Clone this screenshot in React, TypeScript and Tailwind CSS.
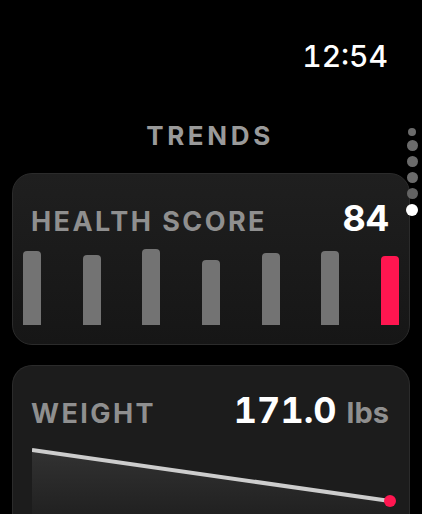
import React from "react";

const bars = [74, 70, 76, 65, 72, 74, 69];

export default function App() {
  return (
    <div
      className="relative w-[422px] h-[514px] overflow-hidden bg-black text-white"
      style={{ fontFamily: "Inter, 'Noto Sans', sans-serif" }}
    >
      <div className="flex justify-end pr-[34px] pt-[41px]">
        <div className="text-[30px] leading-[30px] font-medium tabular-nums">12:54</div>
      </div>
      <div className="mt-[52px] flex justify-center">
        <div className="text-[26px] leading-[26px] font-bold tracking-[0.14em] text-[#9a9a9a] mr-[2px]">
          TRENDS
        </div>
      </div>

      <div className="flex flex-col gap-[20px] px-[12px] mt-[24px]">
        <div className="rounded-[20px] border border-[#2b2b2b] bg-gradient-to-b from-[#1f1f1f] to-[#161616] pt-[26px] pb-[19px] px-[10px]">
          <div className="flex items-baseline justify-between pl-[8px] pr-[10px] h-[36px]">
            <div className="text-[27px] leading-[27px] font-bold tracking-[0.09em] text-[#8f8f8f]">
              HEALTH SCORE
            </div>
            <div className="text-[36px] leading-[36px] font-bold tabular-nums">84</div>
          </div>
          <div className="mt-[13px] h-[76px] flex items-end justify-between">
            {bars.map((h, i) => (
              <div
                key={i}
                className={
                  i === bars.length - 1
                    ? "w-[18px] rounded-t-[4px] bg-[#ff1650]"
                    : "w-[18px] rounded-t-[4px] bg-[#737373]"
                }
                style={{ height: h }}
              />
            ))}
          </div>
        </div>

        <div className="rounded-t-[20px] border border-b-0 border-[#2b2b2b] bg-[#1c1c1c] pt-[26px] px-[10px] h-[160px]">
          <div className="flex items-baseline justify-between pl-[8px] pr-[10px] h-[36px]">
            <div className="text-[27px] leading-[27px] font-bold tracking-[0.09em] text-[#8f8f8f]">
              WEIGHT
            </div>
            <div className="flex items-baseline gap-[10px]">
              <span className="text-[36px] leading-[36px] font-bold tabular-nums">171.0</span>
              <span className="text-[29px] leading-[29px] font-bold text-[#8f8f8f]">lbs</span>
            </div>
          </div>
          <svg width="378" height="80" viewBox="0 0 378 80" className="mt-[17px] ml-[9px] block">
            <defs>
              <linearGradient id="wf" x1="0" y1="0" x2="0" y2="1">
                <stop offset="0" stopColor="#323232" />
                <stop offset="1" stopColor="#1e1e1e" />
              </linearGradient>
            </defs>
            <polygon points="0,5 358,56 358,80 0,80" fill="url(#wf)" />
            <line x1="0" y1="5" x2="358" y2="56" stroke="#cdcdcd" strokeWidth="4" />
            <circle cx="358" cy="56" r="6" fill="#ff1650" />
          </svg>
        </div>
      </div>

      <div className="absolute left-[406px] top-[128px] w-[12px] flex flex-col items-center">
        <div className="w-[8px] h-[8px] rounded-full bg-[#6b6b6b]" />
        <div className="mt-[4px] w-[11px] h-[11px] rounded-full bg-[#6b6b6b]" />
        <div className="mt-[5px] w-[11px] h-[11px] rounded-full bg-[#6b6b6b]" />
        <div className="mt-[5px] w-[11px] h-[11px] rounded-full bg-[#6b6b6b]" />
        <div className="mt-[5px] w-[11px] h-[11px] rounded-full bg-[#6b6b6b]/90" />
        <div className="mt-[5px] w-[12px] h-[12px] rounded-full bg-white" />
      </div>
    </div>
  );
}
